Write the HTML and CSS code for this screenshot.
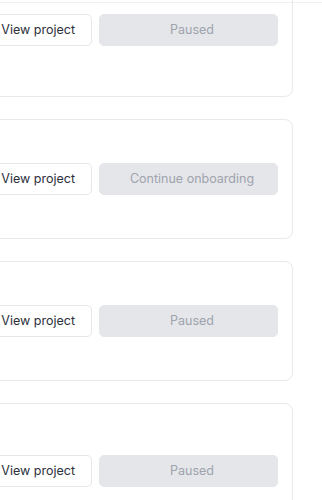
FILE: index.html
```html
<!DOCTYPE html>
<html lang="en">
<head>
<meta charset="utf-8">
<title>Projects</title>
<link rel="stylesheet" href="styles.css">
</head>
<body>
<div class="topbar"></div>
<div class="list">
  <div class="card">
    <div class="info info-tall"></div>
    <div class="actions">
      <button class="btn btn-outline">View project</button>
      <button class="btn btn-disabled" disabled>Paused</button>
    </div>
  </div>
  <div class="card">
    <div class="info"></div>
    <div class="actions">
      <button class="btn btn-outline">View project</button>
      <button class="btn btn-disabled" disabled>Continue onboarding</button>
    </div>
  </div>
  <div class="card">
    <div class="info"></div>
    <div class="actions">
      <button class="btn btn-outline">View project</button>
      <button class="btn btn-disabled" disabled>Paused</button>
    </div>
  </div>
  <div class="card">
    <div class="info info-tall"></div>
    <div class="actions">
      <button class="btn btn-outline">View project</button>
      <button class="btn btn-disabled" disabled>Paused</button>
    </div>
  </div>
</div>
</body>
</html>
```

FILE: styles.css
```css
html, body {
  margin: 0;
  padding: 0;
  background: #ffffff;
  overflow: hidden;
}
body {
  font-family: Inter, "Noto Sans", "Liberation Sans", sans-serif;
  color: #374151;
}
.topbar {
  height: 2px;
  border-bottom: 1px solid #f1f1f3;
}
.list {
  margin-top: -41px;
  margin-left: -200px;
  width: 493px;
  display: flex;
  flex-direction: column;
  gap: 22px;
}
.card {
  box-sizing: border-box;
  border: 1px solid #e8e9ec;
  border-radius: 8px;
  display: flex;
  align-items: center;
  justify-content: space-between;
  padding: 0 14px 0 16px;
}
.info {
  height: 118px;
}
.info-tall {
  height: 133px;
}
.actions {
  display: flex;
  gap: 7px;
}
.btn {
  box-sizing: border-box;
  height: 32px;
  border-radius: 5px;
  font-family: Inter, "Noto Sans", "Liberation Sans", sans-serif;
  font-size: 12.5px;
  font-weight: 400;
  line-height: 20px;
  padding: 0 16px;
  white-space: nowrap;
}
.btn-outline {
  background: #ffffff;
  border: 1px solid #e5e7eb;
  color: #2b303b;
}
.btn-disabled {
  background: #e5e6ea;
  border: 1px solid #e5e6ea;
  color: #9ea3ad;
  width: 179px;
  padding: 0 14px 0 21px;
}
```
